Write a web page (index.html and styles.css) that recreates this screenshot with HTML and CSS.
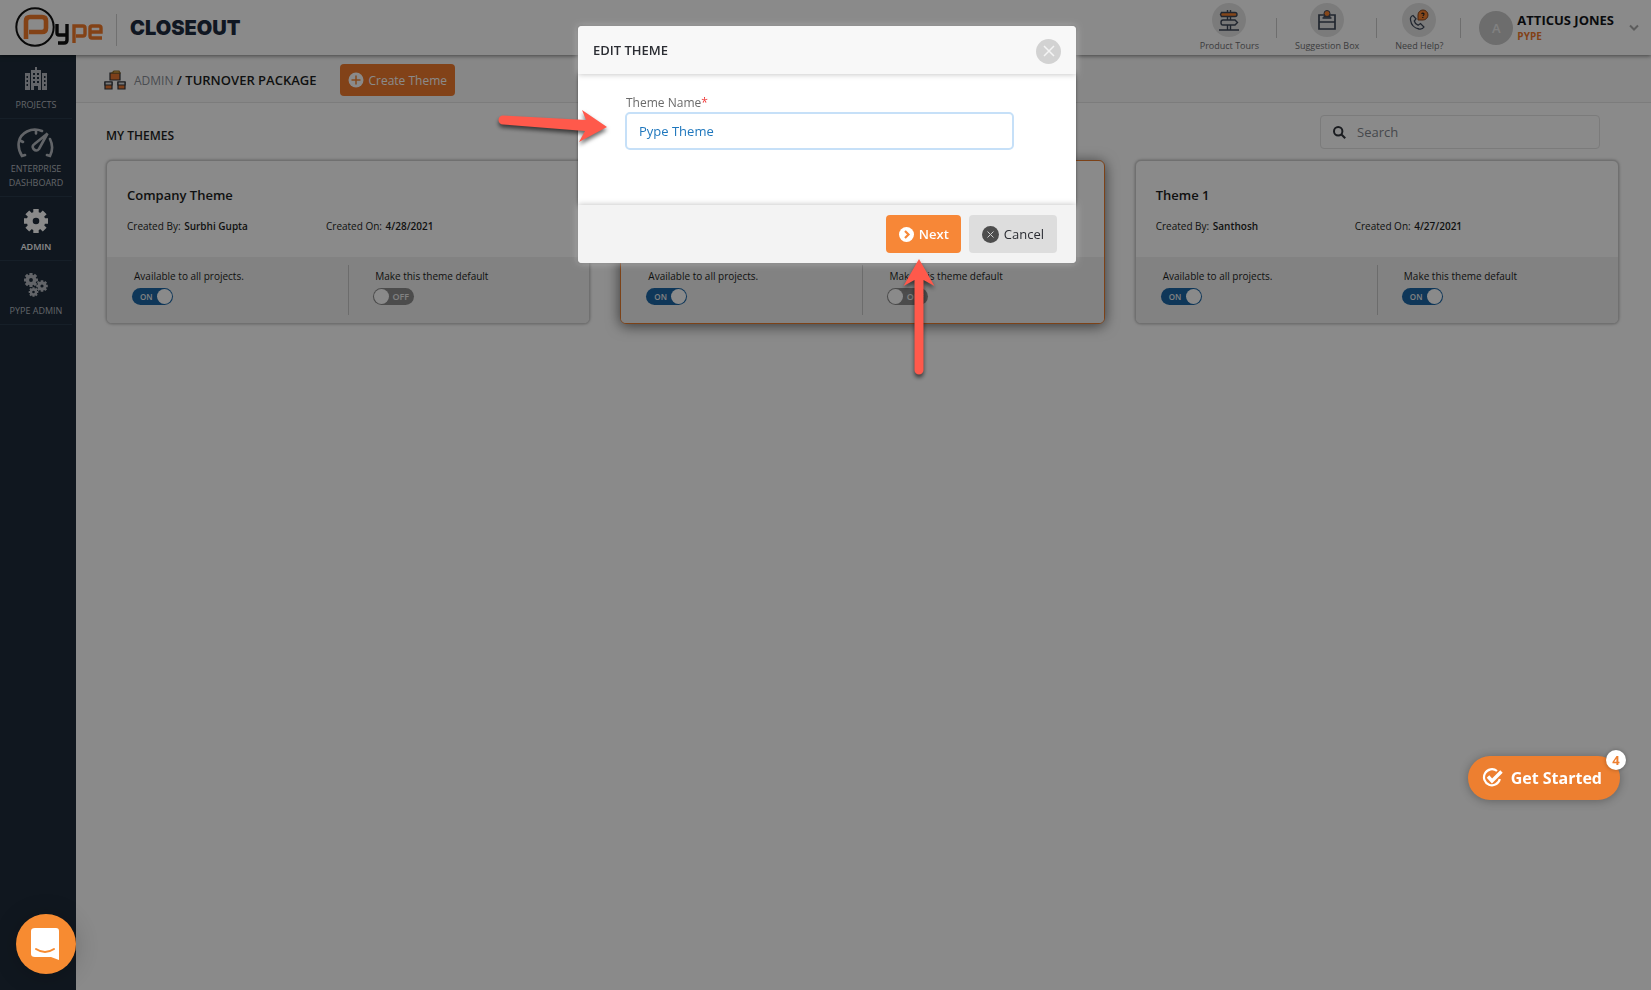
FILE: index.html
```html
<!DOCTYPE html>
<html lang="en">
<head>
<meta charset="utf-8">
<title>Closeout - Turnover Package</title>
<link rel="stylesheet" href="styles.css">
</head>
<body>
<div class="app">
  <header class="topbar">
    <a class="logo" href="#" aria-label="Pype">
      <svg width="90" height="44" viewBox="0 0 90 44" fill="none">
        <circle cx="22" cy="22" r="18.7" stroke="#111" stroke-width="2"/>
        <path d="M13 34V16q0-4 4-4h12q4 0 4 4v7q0 4-4 4H16" stroke="#f37a2a" stroke-width="4.600"/>
        <path d="M44 19v9q0 2 2 2h8M54 19v16q0 3-3 3h-6" stroke="#111" stroke-width="3.400"/>
        <path d="M61 38V21h9q2 0 2 2v6q0 2-2 2h-7M89 33H79q-2 0-2-2v-8q0-2 2-2h7q2 0 2 2v4H78" stroke="#f37a2a" stroke-width="3.400"/>
      </svg>
    </a>
    <span class="product">CLOSEOUT</span>
    <nav class="tools">
      <a class="tool" href="#"><span class="disc">
        <svg width="22" height="22" viewBox="0 0 22 22" stroke="#3d4758" stroke-width="1.400" fill="none">
          <path d="M9.500 1v20M12.500 1v20M1 21h20"/><path d="M3.500 3.500H17q2 0 2 2t-2 2H3.500l-1-2z" fill="#f5812f"/><path d="M5 11h12l2.500 2.500L17 16H5q-2 0-2-2.500T5 11z" fill="#dcdcdc"/>
        </svg></span>Product Tours</a>
      <a class="tool" href="#"><span class="disc">
        <svg width="20" height="22" viewBox="0 0 20 22" stroke="#3d4758" stroke-width="1.700" fill="none">
          <path d="M2 6h16v14H2zM2 13h16M5.500 9h9"/><path d="M6 8.500l1.500-3h5l1.500 3z" fill="#3d4758" stroke="none"/><circle cx="10" cy="4.500" r="3" fill="#f5812f" stroke-width="1"/>
        </svg></span>Suggestion Box</a>
      <a class="tool" href="#"><span class="disc">
        <svg width="22" height="22" viewBox="0 0 22 22" fill="none">
          <path d="M5 6.500q-3 1-2.500 4.500 1 7.500 8.500 9 3.500.6 5-2l-3.500-3.500-2.500 1.700q-3-1.200-3.700-4.200L8 9.800z" stroke="#3d4758" stroke-width="1.300"/>
          <path d="M10 11V6a5 5 0 1 1 5 5z" fill="#f5812f" stroke="#8a4b24"/><path d="M13.500 4.800q1.500-1.500 2.500 0 .2 1-1.200 2M14.800 8v1" stroke="#222" stroke-width="1.200"/>
        </svg></span>Need Help?</a>
    </nav>
    <button class="account" type="button">
      <span class="avatar">A</span>
      <span class="who"><b>ATTICUS JONES</b><small>PYPE</small></span>
      <svg width="10" height="8" viewBox="0 0 10 8" fill="none" stroke="#aaa" stroke-width="2"><path d="M1 1.500l4 4 4-4"/></svg>
    </button>
  </header>

  <div class="body">
    <nav class="sidebar">
      <a class="side-item" href="#">
        <svg width="24" height="26" viewBox="0 0 24 26" fill="#b6bac0"><path fill-rule="evenodd" d="M7 4h4V1h2v3h4v20h-3v-4h-4v4H7zM9 7v2h2V7zm4 0v2h2V7zM9 11v2h2v-2zm4 0v2h2v-2zM9 15v2h2v-2zm4 0v2h2v-2zM1 7h5v17H1zM2.500 10v2H4v-2zm0 4v2H4v-2zm0 4v2H4v-2zM18 7h5v17h-5zM20 10v2h1.500v-2zm0 4v2h1.500v-2zm0 4v2h1.500v-2z"/></svg>
        PROJECTS</a>
      <a class="side-item two-line" href="#">
        <svg width="38" height="32" viewBox="0 0 38 32" fill="none" stroke="#b6bac0" stroke-width="2.600" stroke-linecap="round"><path d="M8 28l-3 1C-1 19 1 9 10 4.500c5-2.600 10-2.500 15-.5M33 12c3 6 3 11 0 17l-3-1M3 13.500l3 1.500M19 3v3.500"/><path d="M30.500 6.500L22 22q-2.500 3-5.500 0-2-3 1-5z"/></svg>
        ENTERPRISE DASHBOARD</a>
      <a class="side-item current" href="#">
        <svg width="24" height="26" viewBox="-12 -13 24 26"><g id="gear"><circle r="6.300" fill="none" stroke="currentColor" stroke-width="6"/><g stroke="currentColor" stroke-width="5.400"><path d="M0-7v-5M0 7v5M-7 0h-5M7 0h5"/><path d="M5 5l3.700 3.700M-5-5l-3.700-3.700M5-5l3.700-3.700M-5 5l-3.700 3.700"/></g></g></svg>
        ADMIN</a>
      <a class="side-item" href="#">
        <svg width="24" height="26" viewBox="0 0 24 26"><use href="#gear" transform="translate(7 8) scale(.58)"/><use href="#gear" transform="translate(18 14) scale(.48)"/><use href="#gear" transform="translate(9.500 20) scale(.4)"/></svg>
        PYPE ADMIN</a>
    </nav>

    <main class="main">
      <div class="crumbs">
        <svg width="22" height="20" viewBox="0 0 22 20" stroke="#30343b" stroke-width="1.200"><path d="M6 3h10v7H6z" fill="#e87730"/><path d="M8 3l2-2h5l1 2z" fill="#eeb04a" stroke="#8c6a2a"/><path d="M1 12h7v7H1zM14 12h7v7h-7z" fill="#e87730"/><path d="M1 12h7v3H1zM14 12h7v3h-7z" fill="#ddd"/></svg>
        <h1 class="path"><a href="#">ADMIN</a> / TURNOVER PACKAGE</h1>
        <button class="create" type="button">
          <svg width="16" height="16" viewBox="0 0 16 16"><circle cx="8" cy="8" r="7.500" fill="#fff"/><path d="M8 3.500v9M3.500 8h9" stroke="#f58634" stroke-width="1.500"/></svg>
          Create Theme</button>
      </div>

      <div class="listbar">
        <h2 class="list-title">MY THEMES</h2>
        <label class="search">
          <svg width="13" height="13" viewBox="0 0 13 13" fill="none" stroke="#30343b" stroke-width="2"><circle cx="5.200" cy="5.200" r="4.200"/><path d="M8.200 8.200l4 4"/></svg>
          <input type="search" placeholder="Search" aria-label="Search">
        </label>
      </div>

      <div class="cards">
        <article class="card">
          <div class="card-top">
            <h3>Company Theme</h3>
            <p class="meta"><span>Created By: <b>Surbhi Gupta</b></span><span>Created On: <b>4/28/2021</b></span></p>
          </div>
          <div class="card-foot">
            <label class="option">Available to all projects.<span class="switch on"><input type="checkbox" checked><span>ON</span></span></label>
            <label class="option">Make this theme default<span class="switch"><input type="checkbox"><span>OFF</span></span></label>
          </div>
        </article>
        <article class="card selected">
          <div class="card-top"></div>
          <div class="card-foot">
            <label class="option">Available to all projects.<span class="switch on"><input type="checkbox" checked><span>ON</span></span></label>
            <label class="option">Make this theme default<span class="switch"><input type="checkbox"><span>OFF</span></span></label>
          </div>
        </article>
        <article class="card">
          <div class="card-top">
            <h3>Theme 1</h3>
            <p class="meta"><span>Created By: <b>Santhosh</b></span><span>Created On: <b>4/27/2021</b></span></p>
          </div>
          <div class="card-foot">
            <label class="option">Available to all projects.<span class="switch on"><input type="checkbox" checked><span>ON</span></span></label>
            <label class="option">Make this theme default<span class="switch on"><input type="checkbox" checked><span>ON</span></span></label>
          </div>
        </article>
      </div>
    </main>
  </div>
</div>

<div class="backdrop">
  <form class="modal" role="dialog" aria-labelledby="modal-title">
    <div class="modal-head">
      <h2 id="modal-title">EDIT THEME</h2>
      <button class="close" type="button" aria-label="Close"><svg width="12" height="12" viewBox="0 0 12 12" stroke="#f4f4f4" stroke-width="1.500"><path d="M1 1l10 10M11 1L1 11"/></svg></button>
    </div>
    <div class="modal-body">
      <label for="theme-name">Theme Name<span class="req">*</span></label>
      <input id="theme-name" type="text" value="Pype Theme">
    </div>
    <div class="modal-foot">
      <button class="btn next" type="button"><svg width="15" height="15" viewBox="0 0 15 15"><circle cx="7.500" cy="7.500" r="7.500" fill="#fff"/><path d="M6 4l3.500 3.500L6 11" fill="none" stroke="#f78737" stroke-width="2.200"/></svg>Next</button>
      <button class="btn cancel" type="button"><svg width="17" height="17" viewBox="0 0 17 17"><circle cx="8.500" cy="8.500" r="8.500" fill="#4d4d4d"/><path d="M5.500 5.500l6 6M11.500 5.500l-6 6" stroke="#ccc"/></svg>Cancel</button>
    </div>
  </form>
</div>

<svg class="arrow arrow-field" width="120" height="44" viewBox="0 0 120 44"><path d="M8 10.500L91 15 87 5l25 17-28 15 6-11L8 19.500a4.500 4.500 0 0 1 0-9z" fill="#ff594b"/></svg>
<svg class="arrow arrow-next" width="44" height="126" viewBox="0 0 44 126"><path d="M22 4l15.500 27L26.500 25v90a4.500 4.500 0 0 1-9 0V25L6.500 31z" fill="#ff594b"/></svg>

<button class="started" type="button">
  <svg width="22" height="20" viewBox="0 0 22 20" fill="none" stroke="#fff"><path d="M15 3A8 8 0 1 0 17.800 11" stroke-width="2.200"/><path d="M6 8.500l4 4.500 9.500-9.500" stroke-width="3.400"/></svg>
  <span>Get Started</span><span class="count">4</span>
</button>
<button class="chat" type="button" aria-label="Open chat">
  <svg width="30" height="34" viewBox="0 0 30 34"><path d="M4 1h21q3 0 3 3v29l-8-3H4q-4 0-4-3V4q0-3 4-3z" fill="#fff"/><path d="M5 22q9 6 18 0" fill="none" stroke="#f78b31" stroke-width="2" stroke-linecap="round"/></svg>
</button>
</body>
</html>
```

FILE: styles.css
```css
* { box-sizing: border-box; }
body { margin: 0; font-family: "Open Sans", sans-serif; color: #1c1e22; background: #fff; }
h1, h2, h3, p { margin: 0; }
a { color: inherit; text-decoration: none; }
button { font: inherit; border: 0; padding: 0; cursor: pointer; }
svg { flex: none; display: block; }

.app { min-height: 100vh; display: flex; flex-direction: column; }

.topbar { height: 55px; display: flex; align-items: center; padding: 0 12px 0 13px; box-shadow: 0 1px 4px rgba(0, 0, 0, .5); z-index: 1; }
.logo { height: 50px; padding-top: 2px; }
.product { margin-left: 13px; padding: 0 0 0 13px; border-left: 1px solid #d0d0d0; height: 32px; line-height: 28px; margin-top: 4px; font-family: Inter, sans-serif; font-weight: 900; font-size: 20px; color: #1e2c40; }
.tools { margin-left: auto; display: flex; align-items: center; }
.tool { display: flex; flex-direction: column; align-items: center; gap: 2px; padding: 0 18px; font-size: 9px; line-height: 14px; color: #6f7073; position: relative; }
.tool::after { content: ""; position: absolute; right: 0; top: 15px; width: 1px; height: 20px; background: #ccc; }
.disc { width: 34px; height: 34px; border-radius: 50%; background: #e4e4e4; display: grid; place-items: center; }
.account { display: flex; align-items: center; background: none; margin-left: 18px; text-align: left; color: #14161a; }
.avatar { width: 34px; height: 34px; border-radius: 50%; background: #c9c9c9; color: #efefef; display: grid; place-items: center; font-size: 13px; font-weight: 600; }
.who { display: flex; flex-direction: column; margin: 0 15px 0 4px; }
.who b { font-size: 13px; line-height: 17px; }
.who small { font-size: 10px; line-height: 14px; font-weight: 700; color: #f0792b; }

.body { flex: 1; display: flex; }
.sidebar { width: 76px; flex: none; background: #1e2c3a; color: #b6bac0; }
.side-item { display: flex; flex-direction: column; align-items: center; gap: 6px; margin-right: 4px; padding: 11px 4px 6px; border-bottom: 1px solid #2a3a4b; font-size: 9px; line-height: 14px; text-align: center; }
.two-line { gap: 3px; padding-top: 8px; }
.current { color: #fff; font-weight: 600; }

.main { flex: 1; min-width: 0; }
.crumbs { height: 48px; display: flex; align-items: center; padding: 3px 28px 0; background: #fafafa; border-bottom: 1px solid #e6e6e6; }
.path { margin: 0 24px 0 8px; font-size: 13px; font-weight: 600; }
.path a { font-size: 12px; font-weight: 400; color: #898d95; }
.create { display: flex; align-items: center; gap: 4px; height: 32px; padding: 0 8px; border-radius: 4px; background: #f07a2d; color: #fff; font-size: 12px; }

.listbar { display: flex; align-items: center; justify-content: space-between; padding: 12px 51px 11px 30px; }
.list-title { padding-top: 6px; font-size: 12px; font-weight: 600; }
.search { width: 280px; height: 34px; display: flex; align-items: center; gap: 11px; padding: 0 12px; border: 1px solid #e3e3e3; border-radius: 4px; }
.search input { flex: 1; min-width: 0; border: 0; outline: 0; background: none; padding: 0; font: 13px "Open Sans", sans-serif; }
.search input::placeholder { color: #82868d; }

.cards { display: grid; grid-template-columns: repeat(3, 1fr); gap: 30px; padding: 0 32px 0 30px; }
.card { border: 1px solid #d0d0d0; border-radius: 6px; background: #fff; box-shadow: 0 0 3px rgba(0, 0, 0, .35); overflow: hidden; }
.selected { border-color: #e67a2e; box-shadow: 0 2px 14px rgba(0, 0, 0, .6); }
.card-top { height: 96px; padding: 24px 20px 0; }
.card-top h3 { font-size: 13px; line-height: 20px; font-weight: 600; }
.meta { display: grid; grid-template-columns: 199px 1fr; margin-top: 14px; font-size: 10px; line-height: 14px; }
.meta b { font-weight: 600; margin-left: 1px; }
.card-foot { background: #f0f0f0; display: grid; grid-template-columns: 1fr 1fr; padding: 8px 0; }
.option { height: 50px; padding: 4px 0 0 27px; font-size: 10px; line-height: 14px; }
.option:last-child { padding-left: 26px; border-left: 1px solid #c8c8c8; }
.switch { display: flex; align-items: center; justify-content: flex-end; width: 41px; height: 17px; margin: 5px 0 0 -2px; padding: 0 5px; border-radius: 9px; background: #8c8c8c; color: #eee; font-size: 9px; font-weight: 600; position: relative; }
.switch.on { background: #1c66a5; justify-content: flex-start; padding: 0 8px; font-size: 8px; }
.switch input { appearance: none; position: absolute; left: 1px; top: 1px; width: 15px; height: 15px; margin: 0; border-radius: 50%; background: #fff; }
.switch.on input { left: auto; right: 1px; }

.backdrop { position: fixed; inset: 0; z-index: 5; background: rgba(0, 0, 0, .46); padding: 26px 0 0 3px; }
.modal { width: 498px; margin: 0 auto; background: #fff; border-radius: 4px; box-shadow: 0 0 3px rgba(0, 0, 0, .5); }
.modal-head { height: 48px; display: flex; align-items: center; justify-content: space-between; padding: 0 15px; background: #f8f8f8; border-radius: 4px 4px 0 0; box-shadow: 0 0 6px #bbb; }
.modal-head h2 { font-size: 13px; font-weight: 600; color: #2b2d33; }
.close { width: 25px; height: 25px; border-radius: 50%; background: #d2d2d2; display: grid; place-items: center; margin-top: 2px; }
.modal-body { padding: 21px 62px 0 47px; display: flex; flex-direction: column; height: 131px; }
.modal-body label { font-size: 12px; line-height: 16px; color: #6a6a6a; padding-left: 1px; }
.req { color: #f04040; }
.modal-body input { height: 38px; margin-top: 1px; flex: none; border: 2px solid #c6e0f8; border-radius: 5px; padding: 0 12px; font: 13px "Open Sans", sans-serif; color: #1f77bd; outline: 0; }
.modal-foot { height: 58px; display: flex; align-items: center; justify-content: flex-end; gap: 8px; padding: 0 19px; background: #f3f3f3; border-radius: 0 0 4px 4px; box-shadow: 0 0 6px #bbb; }
.btn { height: 38px; display: flex; align-items: center; gap: 5px; padding: 0 13px; border-radius: 4px; font-size: 13px; }
.next { padding: 0 12px 0 13px; background: #f78737; color: #fff; font-weight: 600; }
.cancel { background: #ddd; color: #2b2d33; }

.arrow { position: fixed; z-index: 6; filter: drop-shadow(0 3px 2px rgba(0, 0, 0, .6)); }
.arrow-field { left: 495px; top: 105px; }
.arrow-next { left: 897px; top: 255px; }

.started { position: fixed; z-index: 6; right: 31px; bottom: 190px; height: 44px; display: flex; align-items: center; gap: 7px; padding: 0 18px 0 14px; border-radius: 22px; background: #ed7f30; color: #fff; font-size: 16px; font-weight: 700; box-shadow: 0 1px 10px rgba(0, 0, 0, .3); }
.count { position: absolute; right: -6px; top: -6px; width: 20px; height: 20px; border-radius: 50%; background: #fff; color: #ed7f30; font-size: 13px; line-height: 20px; box-shadow: 0 0 4px rgba(0, 0, 0, .3); }
.chat { position: fixed; z-index: 6; left: 16px; bottom: 16px; width: 60px; height: 60px; border-radius: 50%; background: #f78b31; display: grid; place-items: center; box-shadow: 0 2px 24px rgba(0, 0, 0, .2); }
```
